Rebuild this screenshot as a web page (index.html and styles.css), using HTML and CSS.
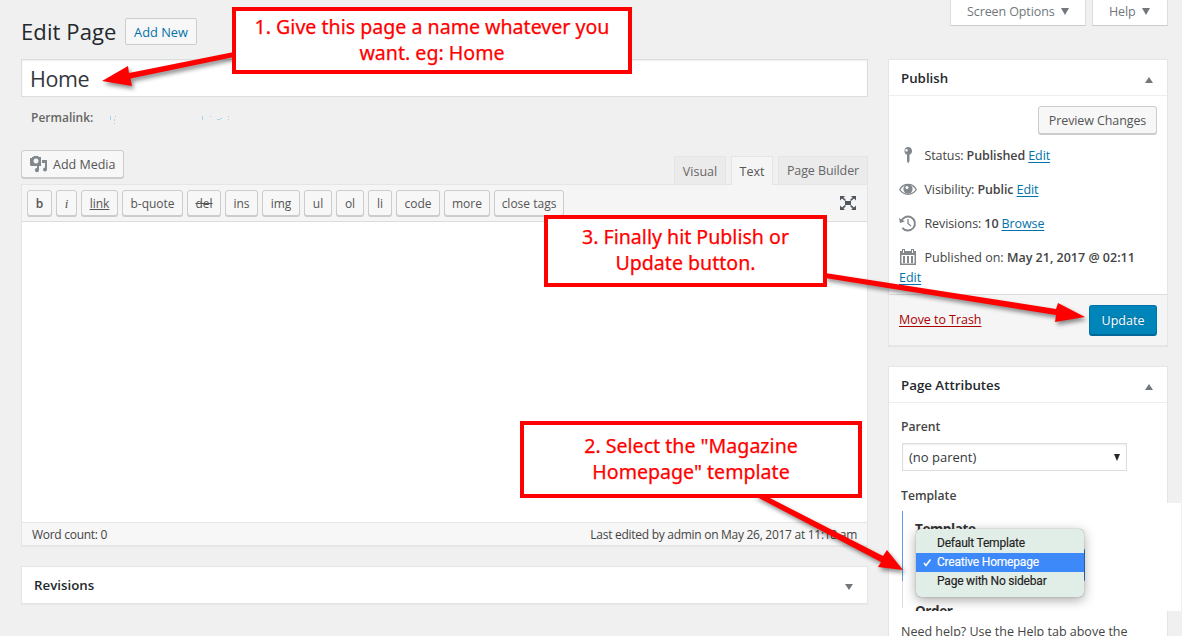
FILE: index.html
```html
<!DOCTYPE html>
<html lang="en">
<head>
<meta charset="utf-8">
<title>Edit Page</title>
<link rel="stylesheet" href="styles.css">
</head>
<body>
<div class="page">
  <main class="main">
    <header class="heading"><h1>Edit Page</h1><a class="add-new">Add New</a></header>
    <div class="title-input">Home</div>
    <div class="permalink"><strong>Permalink:</strong>
      <svg class="url-marks" width="125" height="12" viewBox="0 0 125 12" fill="#a9d3e6"><path d="M5 2h1v4H5zM9 5h1v2H9zM10 2h1v1h-1zM9 9h1v1H9zM97 2h1v4h-1zM105 2h1v1h-1zM112 5h3v1h-3zM115 4h2v1h-2zM123 2h1v1h-1zM123 5h1v1h-1z"/></svg>
    </div>
    <div class="editor-tools">
      <button class="btn media"><svg width="18" height="17" viewBox="0 0 18 17"><path fill="#82878c" fill-rule="evenodd" d="M0 2h2V1h1L4 0h4l1 1h2v9H1L0 9zM6 2.500a2.500 2.500 0 1 0 .01 0zM12 4h5v9.500a2 2 0 1 1-2-2V7h-3zM9 10v4a2.100 2.100 0 1 1-2-2v-2z"/></svg><span>Add Media</span></button>
      <div class="tabs"><span class="tab visual">Visual</span><span class="tab text active">Text</span><span class="tab builder">Page Builder</span></div>
    </div>
    <section class="editor">
      <div class="toolbar">
        <button class="qt w25"><b>b</b></button><button class="qt w21"><i>i</i></button><button class="qt w37"><u>link</u></button><button class="qt w61">b-quote</button><button class="qt w34"><s>del</s></button><button class="qt w33">ins</button><button class="qt w38">img</button><button class="qt w28">ul</button><button class="qt w28">ol</button><button class="qt w24">li</button><button class="qt w44">code</button><button class="qt w46">more</button><button class="qt w70">close tags</button>
        <svg class="expand" width="16" height="14" viewBox="0 0 16 14"><path fill="#50575e" d="M5 5h6v4H5zM0 0h5L3.500 1.500 6 4 5 5 2 2.500 0 4.500zM16 0h-5l1.500 1.500L10 4l1 1 3-2.500 2 2zM0 14h5l-1.500-1.500L6 10 5 9l-3 2.500-2-2zM16 14h-5l1.500-1.500L10 10l1-1 3 2.500 2-2z"/></svg>
      </div>
      <div class="canvas"></div>
      <footer class="status"><span>Word count: 0</span><span class="last">Last edited by admin on May 26, 2017 at 11:18 am</span></footer>
    </section>
    <section class="revisions"><h2>Revisions</h2><svg width="8" height="6" viewBox="0 0 8 6"><path fill="#72777c" d="M0 0h8L4 6z"/></svg></section>
  </main>
  <aside class="side">
    <nav class="meta">
      <span class="meta-link options">Screen Options<svg width="8" height="7" viewBox="0 0 8 7"><path fill="#72777c" d="M0 0h8L4 7z"/></svg></span>
      <span class="meta-link help">Help<svg width="8" height="7" viewBox="0 0 8 7"><path fill="#72777c" d="M0 0h8L4 7z"/></svg></span>
    </nav>
    <section class="box publish">
      <div class="box-head"><h2>Publish</h2><svg width="8" height="6" viewBox="0 0 8 6"><path fill="#72777c" d="M4 0l4 6H0z"/></svg></div>
      <div class="publish-body">
        <button class="btn preview">Preview Changes</button>
        <div class="row"><svg width="18" height="18" viewBox="0 0 18 18"><path fill="#82878c" fill-rule="evenodd" d="M9 1a4 4 0 0 1 1.500 7.700V15L9 17.500 8 15V8.700A4 4 0 0 1 9 1zM7.500 3a1.300 1.300 0 1 0 .01 0z"/></svg><span>Status: <b>Published</b> <a>Edit</a></span></div>
        <div class="row"><svg width="18" height="18" viewBox="0 0 18 18"><path fill="none" stroke="#82878c" stroke-width="1.400" d="M.8 9.500C4.500 2.700 13.500 2.700 17.200 9.500 13.500 15.800 4.500 15.800.8 9.500z"/><circle cx="9" cy="9" r="4.600" fill="#82878c"/><circle cx="8" cy="7.500" r="1.500" fill="#fff"/></svg><span>Visibility: <b>Public</b> <a>Edit</a></span></div>
        <div class="row"><svg width="18" height="18" viewBox="0 0 18 18"><path fill="none" stroke="#82878c" stroke-width="1.900" d="M2.200 7.500a7 7 0 1 1 1.200 6.300"/><path fill="#82878c" d="M0 4l1 5 5-1.500z"/><path fill="none" stroke="#82878c" stroke-width="1.300" d="M9 5v4.500l3 2.500"/></svg><span>Revisions: <b>10</b> <a>Browse</a></span></div>
        <div class="row"><svg width="18" height="18" viewBox="0 0 18 18"><path fill="#82878c" fill-rule="evenodd" d="M1 3h2V1h3v2h6V1h3v2h2v14H1zM2.500 7v8.500h13V7zM4 2v3h1V2zM13 2v3h1V2z"/><path fill="#82878c" d="M4 8h2v7H4zM8 8h2v7H8zM12 8h2v7h-2z"/></svg><span class="date-text">Published on: <b>May 21, 2017 @ 02:11</b></span></div>
        <a class="date-edit">Edit</a>
      </div>
      <div class="actions"><a class="trash">Move to Trash</a><button class="update">Update</button></div>
    </section>
    <section class="box attributes">
      <div class="box-head"><h2>Page Attributes</h2><svg width="8" height="6" viewBox="0 0 8 6"><path fill="#72777c" d="M4 0l4 6H0z"/></svg></div>
      <div class="attr-body">
        <label class="parent">Parent</label>
        <div class="select"><span>(no parent)</span><svg width="6" height="7" viewBox="0 0 6 7"><path fill="#23282d" d="M0 0h6L3 7z"/></svg></div>
        <label class="template">Template</label>
        <div class="picker">
          <div class="edge"></div>
          <div class="under under-top">Template</div>
          <div class="menu-focus"></div>
          <div class="menu">
            <div class="item first"><span>Default Template</span></div>
            <div class="item chosen"><svg width="9" height="9" viewBox="0 0 9 9"><path fill="none" stroke="#fff" stroke-width="1.500" d="M1 5l2 2.500L7.500 1.500"/></svg><span>Creative Homepage</span></div>
            <div class="item"><span>Page with No sidebar</span></div>
          </div>
          <div class="under under-bottom">Order</div>
        </div>
        <p class="hint">Need help? Use the Help tab above the</p>
      </div>
    </section>
  </aside>
</div>

<svg class="arrows" width="1182" height="636" viewBox="0 0 1182 636">
  <g fill="#f00">
    <path d="M234 52L129 73 128 66 102 81 132 86 130.500 78.500 234 57z"/>
    <path d="M825 273L1056 309 1058 303 1085 317 1055 322 1056 315 825 278z"/>
    <path d="M753 495L764 495 883 556 887 550 903 570 878 567 881 562z"/>
  </g>
</svg>
<div class="callout one"><span>1. Give this page a name whatever you</span><span>want. eg: Home</span></div>
<div class="callout three"><span>3. Finally hit Publish or</span><span>Update button.</span></div>
<div class="callout two"><span>2. Select the "Magazine</span><span>Homepage" template</span></div>
</body>
</html>
```
FILE: styles.css
```css
* { box-sizing: border-box; }
body {
  margin: 0;
  width: 1182px;
  height: 636px;
  overflow: hidden;
  position: relative;
  background: #f0f0f0;
  color: #444;
  font: 12.5px/18px "Open Sans", "Noto Sans", sans-serif;
}
h1, h2, p { margin: 0; font-weight: 400; }
button { font: inherit; color: inherit; padding: 0; margin: 0; }
svg { display: block; flex: none; }
b, strong { font-weight: 600; }
a { color: #0073aa; text-decoration: underline; text-underline-offset: 2px; }
span, label, a, h1, h2, button { white-space: nowrap; }

.page { display: flex; gap: 20px; width: 1182px; height: 636px; padding-left: 21px; overflow: hidden; }
.main { width: 847px; display: flex; flex-direction: column; }
.heading { height: 59px; display: flex; align-items: flex-start; padding-top: 18px; }
.heading h1 { width: 104px; font-size: 22px; line-height: 26px; color: #23282d; letter-spacing: .1px; }
.add-new {
  width: 72px; height: 27px; border: 1px solid #ccc; border-radius: 2px; background: #f7f7f7;
  text-align: center; line-height: 27px; font-weight: 500; font-size: 12.8px; text-decoration: none;
}
.title-input {
  height: 38px; border: 1px solid #ddd; background: #fff; box-shadow: inset 0 1px 2px rgba(0,0,0,.07);
  padding-left: 8px; font-size: 21.5px; line-height: 38px; color: #32373c; letter-spacing: -.4px;
}
.permalink { height: 53px; display: flex; align-items: flex-start; padding: 12px 0 0 10px; font-size: 12px; color: #666; }
.permalink strong { width: 74px; }
.url-marks { margin-top: 5px; }
.editor-tools { height: 34px; display: flex; justify-content: space-between; align-items: flex-start; }
.btn { border: 1px solid #ccc; border-radius: 3px; background: #f7f7f7; box-shadow: 0 1px 0 #ccc; color: #555; flex: none; }
.media { width: 103px; height: 28px; display: flex; align-items: center; gap: 5px; padding-left: 8px; }
.media span { padding-top: 1px; }
.tabs { display: flex; gap: 5px; padding-top: 6px; }
.tab { height: 28px; border: 1px solid #e5e5e5; border-bottom: 0; background: #ebebeb; color: #666; line-height: 29px; text-align: center; }
.tab.active { height: 29px; background: #f5f5f5; color: #555; position: relative; }
.visual { width: 52px; }
.text { width: 42px; }
.builder { width: 90px; line-height: 27px; letter-spacing: -.1px; }
.editor { height: 362px; border: 1px solid #e5e5e5; display: flex; flex-direction: column; background: #fff; box-shadow: 0 1px 1px rgba(0,0,0,.04); }
.toolbar { height: 37px; flex: none; display: flex; gap: 4px; padding: 5px 11px 0 5px; background: #f5f5f5; border-bottom: 1px solid #ddd; }
.qt { height: 26px; border: 1px solid #ccc; border-radius: 3px; background: #f7f7f7; box-shadow: 0 1px 0 #ccc; color: #555; font-size: 12px; line-height: 25px; text-align: center; }
.qt i { font-family: "Liberation Serif", serif; font-size: 13px; }
.w21 { width: 21px; } .w24 { width: 24px; } .w25 { width: 25px; } .w28 { width: 28px; } .w33 { width: 33px; }
.w34 { width: 34px; } .w37 { width: 37px; } .w38 { width: 38px; } .w44 { width: 44px; } .w46 { width: 46px; }
.w61 { width: 61px; } .w70 { width: 70px; }
.expand { margin: 6px 0 0 auto; }
.canvas { height: 300px; flex: none; }
.status { height: 23px; flex: none; background: #f7f7f7; border-top: 1px solid #e5e5e5; display: flex; justify-content: space-between; padding: 0 10px; font-size: 12px; line-height: 23px; letter-spacing: -.28px; }
.revisions { margin-top: 20px; height: 38px; border: 1px solid #e5e5e5; background: #fff; box-shadow: 0 1px 1px rgba(0,0,0,.04); display: flex; align-items: center; justify-content: space-between; padding: 0 14px 0 12px; }
.revisions svg { margin-top: 4px; }
h2 { font-size: 13.3px; font-weight: 600; color: #23282d; }

.side { width: 294px; display: flex; flex-direction: column; }
.meta { height: 59px; flex: none; padding-right: 14px; display: flex; justify-content: flex-end; align-items: flex-start; gap: 6px; }
.meta-link { height: 26px; border: 1px solid #ddd; border-top: 0; border-bottom-color: #ccc; background: #fff; color: #72777c; display: flex; gap: 6px; line-height: 23px; padding-left: 16px; letter-spacing: -.1px; }
.meta-link svg { margin-top: 8px; }
.options { width: 136px; }
.help { width: 76px; }
.box { width: 280px; flex: none; border: 1px solid #e5e5e5; background: #fff; box-shadow: 0 1px 1px rgba(0,0,0,.04); }
.box-head { height: 36px; border-bottom: 1px solid #eee; display: flex; align-items: center; justify-content: space-between; padding: 0 14px 0 12px; }
.box-head svg { margin-top: 4px; }
.publish { height: 287px; }
.publish-body { height: 198px; padding: 10px 10px 0; display: flex; flex-direction: column; }
.preview { width: 119px; height: 28px; align-self: flex-end; margin-bottom: 4px; line-height: 27px; letter-spacing: -.1px; }
.row { height: 34px; display: flex; align-items: center; gap: 7.500px; flex: none; letter-spacing: -.1px; }
.row span { padding-top: 2px; }
.row .date-text { letter-spacing: 0; }
.date-edit { margin-top: -5px; align-self: flex-start; }
.actions { height: 51px; background: #f5f5f5; border-top: 1px solid #ddd; display: flex; justify-content: space-between; align-items: flex-start; padding: 10px 10px 0; }
.trash { color: #a00; margin-top: 6px; letter-spacing: -.05px; }
.update { width: 68px; height: 31px; background: #0085ba; border: 1px solid #0073aa; border-bottom: 2px solid #006799; border-radius: 3px; color: #fff; text-shadow: 0 -1px 1px #006799; line-height: 30px; }
.attributes { margin-top: 20px; height: 290px; }
.attr-body { padding: 15px 0 0 12px; display: flex; flex-direction: column; align-items: flex-start; }
.attr-body label { font-weight: 600; height: 18px; line-height: 18px; font-size: 12.2px; }
.select { width: 225px; height: 28px; margin: 7px 0 0 1px; border: 1px solid #ddd; background: #fff; box-shadow: inset 0 1px 2px rgba(0,0,0,.07); color: #32373c; display: flex; align-items: center; justify-content: space-between; padding: 0 6px; font-size: 13px; }
.attr-body .template { margin-top: 16px; height: 16px; }
/* The picker runs past the right edge of its box */
.picker { position: relative; width: 280px; height: 108px; margin: 0; overflow: hidden; background: #fff; }
.edge { position: absolute; left: 1px; top: 8px; width: 1px; height: 97px; background: linear-gradient(#5b9de0 70px, #ddd 70px); }
.under { position: absolute; left: 14px; font: 700 13.5px/18px "Open Sans", sans-serif; color: #333; letter-spacing: -.4px; }
.under-top { top: 17px; }
.under-bottom { top: 99px; }
.menu-focus { position: absolute; left: 17px; top: 45px; width: 167px; height: 34px; background: #3577bd; border-radius: 3px; }
.menu { position: absolute; left: 15px; top: 26px; width: 168px; height: 68px; padding-top: 5px; border-radius: 5px; background: #e1ede7; box-shadow: 0 3px 12px rgba(0,0,0,.35), 0 0 1px rgba(0,0,0,.5); font: 12px/19px Roboto, "Liberation Sans", sans-serif; letter-spacing: -.2px; color: #222; -webkit-text-stroke: .15px; }
.item { height: 19px; padding-left: 21px; }
.item.chosen { height: 19px; background: #3d89f9; color: #fff; display: flex; align-items: center; gap: 5px; padding-left: 7px; }
.hint { margin-top: 12px; white-space: nowrap; }

.arrows { position: absolute; left: 0; top: 0; filter: drop-shadow(2px 3px 2px rgba(0,0,0,.45)); }
.callout { position: absolute; border: 4px solid #f00; background: #fff; color: #f00; display: flex; flex-direction: column; align-items: center; font: 19.6px/26px "Noto Sans", "Open Sans", sans-serif; -webkit-text-stroke: .25px; }
.one { left: 232px; top: 7px; width: 400px; height: 67px; padding-top: 3px; }
.two { left: 520px; top: 421px; width: 342px; height: 77px; padding-top: 8px; }
.three { left: 544px; top: 215px; width: 283px; height: 72px; padding-top: 5px; }
```
